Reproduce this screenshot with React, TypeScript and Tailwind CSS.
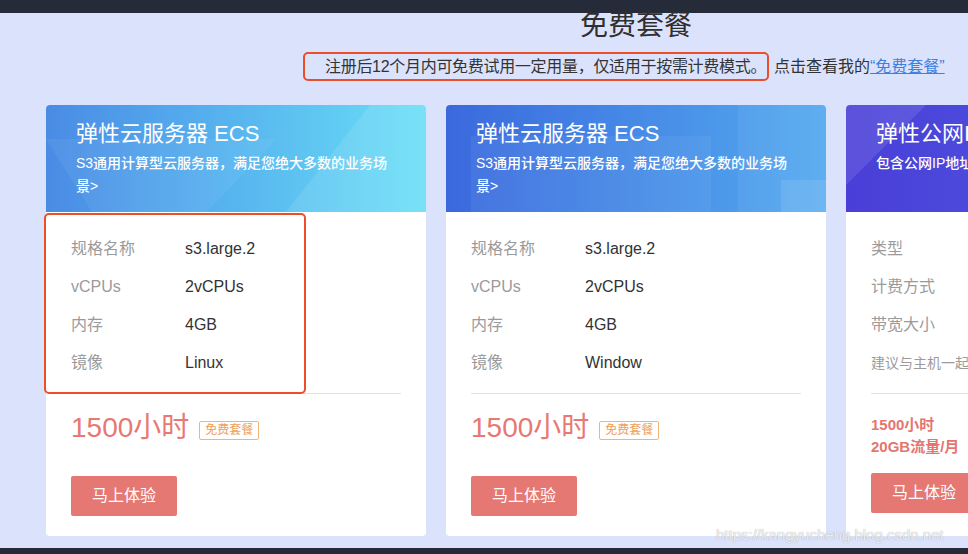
import React from 'react';

const font = { fontFamily: '"Liberation Sans", "Noto Sans CJK SC", sans-serif' };

interface Row {
  label: string;
  value?: string;
  small?: boolean;
}

interface PlanCardProps {
  title: string;
  desc: string;
  headerClass: string;
  decor: 'tri' | 'rect' | 'diag';
  rows: Row[];
  compactPrice?: boolean;
  highlight?: boolean;
}

function PlanCard({ title, desc, headerClass, decor, rows, compactPrice, highlight }: PlanCardProps) {
  return (
    <div className="relative w-[380px] shrink-0 bg-white rounded-[4px] flex flex-col pb-[20px]">
      {/* --- Header --- */}
      <div className={`relative h-[107px] overflow-hidden rounded-t-[4px] px-[30px] pt-[14px] ${headerClass}`}>
        {decor === 'tri' && (
          <>
            <div className="absolute left-0 top-[34px] w-[230px] h-[73px] bg-white/5 [clip-path:polygon(0_0,100%_0,70%_100%,20%_100%)]" />
            <div className="absolute right-0 top-0 w-[140px] h-[107px] bg-white/10 [clip-path:polygon(60%_0,100%_0,100%_100%,0_100%)]" />
          </>
        )}
        {decor === 'rect' && (
          <>
            <div className="absolute left-[25px] top-[31px] w-[240px] h-[76px] bg-white/5" />
            <div className="absolute right-0 top-0 w-[88px] h-[107px] bg-white/5" />
            <div className="absolute right-0 top-[75px] w-[45px] h-[32px] bg-white/10" />
          </>
        )}
        {decor === 'diag' && (
          <div className="absolute left-0 top-0 w-[200px] h-[80px] bg-white/10 [clip-path:polygon(0_0,40%_0,0_100%)]" />
        )}
        <div className="relative">
          <div className="text-[22px] leading-[30px] text-white whitespace-nowrap">{title}</div>
          <div className="mt-[3px] text-[14px] leading-[23px] font-medium text-white">{desc}</div>
        </div>
      </div>

      {/* --- Spec rows --- */}
      <div className="mx-[25px] pt-[18px] pb-[11px] border-b border-[#e3e3e3]">
        {rows.map((r) => (
          <div key={r.label} className="flex items-center h-[38px]">
            <span className={`w-[114px] shrink-0 whitespace-nowrap text-[#9b9b9b] ${r.small ? 'text-[14px]' : 'text-[16px]'}`}>
              {r.label}
            </span>
            {r.value && <span className="text-[16px] text-[#333]">{r.value}</span>}
          </div>
        ))}
      </div>

      {/* --- Price --- */}
      {compactPrice ? (
        <div className="mx-[25px] mt-[20px] text-[15px] leading-[22px] font-bold text-[#e5756e]">
          <div>1500小时</div>
          <div className="whitespace-nowrap">20GB流量/月</div>
        </div>
      ) : (
        <div className="mx-[25px] mt-[16px] flex items-center h-[36px]">
          <span className="text-[28px] text-[#e87872] leading-none">1500小时</span>
          <span className="ml-[10px] mt-[4px] h-[19px] px-[5px] border border-[#f1b57a] text-[12px] leading-[17px] text-[#eea058] rounded-[2px]">
            免费套餐
          </span>
        </div>
      )}

      <div className={`mx-[25px] ${compactPrice ? 'mt-[15px]' : 'mt-[30px]'}`}>
        <button className="h-[40px] px-[21px] bg-[#e57872] text-white text-[16px] rounded-[2px] whitespace-nowrap">
          马上体验
        </button>
      </div>

      {highlight && (
        <div className="absolute left-[-2px] top-[108px] w-[262px] h-[181px] border-2 border-[#ea4f2a] rounded-[5px] pointer-events-none" />
      )}
    </div>
  );
}

export default function App() {
  return (
    <div style={font} className="relative w-[968px] h-[554px] overflow-hidden bg-[#dbe2fc] flex flex-col">
      <div className="h-[13px] shrink-0 bg-[#262b3a]" />

      <div className="-mt-[1px] h-[28px] pl-[580px] text-[28px] leading-[28px] text-[#2f2f2f] whitespace-nowrap">
        免费套餐
      </div>

      <div className="mt-[12px] flex items-center whitespace-nowrap text-[16px] text-[#333]">
        <div className="ml-[303px] w-[466px] h-[29px] flex items-center pl-[20px] border-2 border-[#ea4f2a] rounded-[5px] tracking-[-0.3px]">
          注册后12个月内可免费试用一定用量，仅适用于按需计费模式。
        </div>
        <span className="ml-[5px]">点击查看我的</span>
        <a className="text-[#3e7fe0] underline">“免费套餐”</a>
      </div>

      <div className="mt-[24px] flex gap-[20px] pl-[46px]">
        <PlanCard
          title="弹性云服务器 ECS"
          desc="S3通用计算型云服务器，满足您绝大多数的业务场景>"
          headerClass="bg-linear-to-r from-[#4a8be5] to-[#69dff6]"
          decor="tri"
          highlight
          rows={[
            { label: '规格名称', value: 's3.large.2' },
            { label: 'vCPUs', value: '2vCPUs' },
            { label: '内存', value: '4GB' },
            { label: '镜像', value: 'Linux' },
          ]}
        />
        <PlanCard
          title="弹性云服务器 ECS"
          desc="S3通用计算型云服务器，满足您绝大多数的业务场景>"
          headerClass="bg-linear-to-r from-[#3b69dd] to-[#55aaef]"
          decor="rect"
          rows={[
            { label: '规格名称', value: 's3.large.2' },
            { label: 'vCPUs', value: '2vCPUs' },
            { label: '内存', value: '4GB' },
            { label: '镜像', value: 'Window' },
          ]}
        />
        <PlanCard
          title="弹性公网IP EIP"
          desc="包含公网IP地址与公网出口带宽服务"
          headerClass="bg-linear-to-r from-[#4a3ed8] to-[#4f5fe2]"
          decor="diag"
          compactPrice
          rows={[
            { label: '类型', value: '全动态BGP' },
            { label: '计费方式', value: '按需计费' },
            { label: '带宽大小', value: '5Mbit/s' },
            { label: '建议与主机一起购买', small: true },
          ]}
        />
      </div>

      <div className="mt-auto h-[6px] shrink-0 bg-[#262b3a]" />

      <div className="absolute left-[716px] top-[525px] text-[15px] leading-[20px] text-white/80 [text-shadow:0_0_1px_rgba(90,90,90,0.6)] whitespace-nowrap">
        https://kangyucheng.blog.csdn.net
      </div>
    </div>
  );
}
